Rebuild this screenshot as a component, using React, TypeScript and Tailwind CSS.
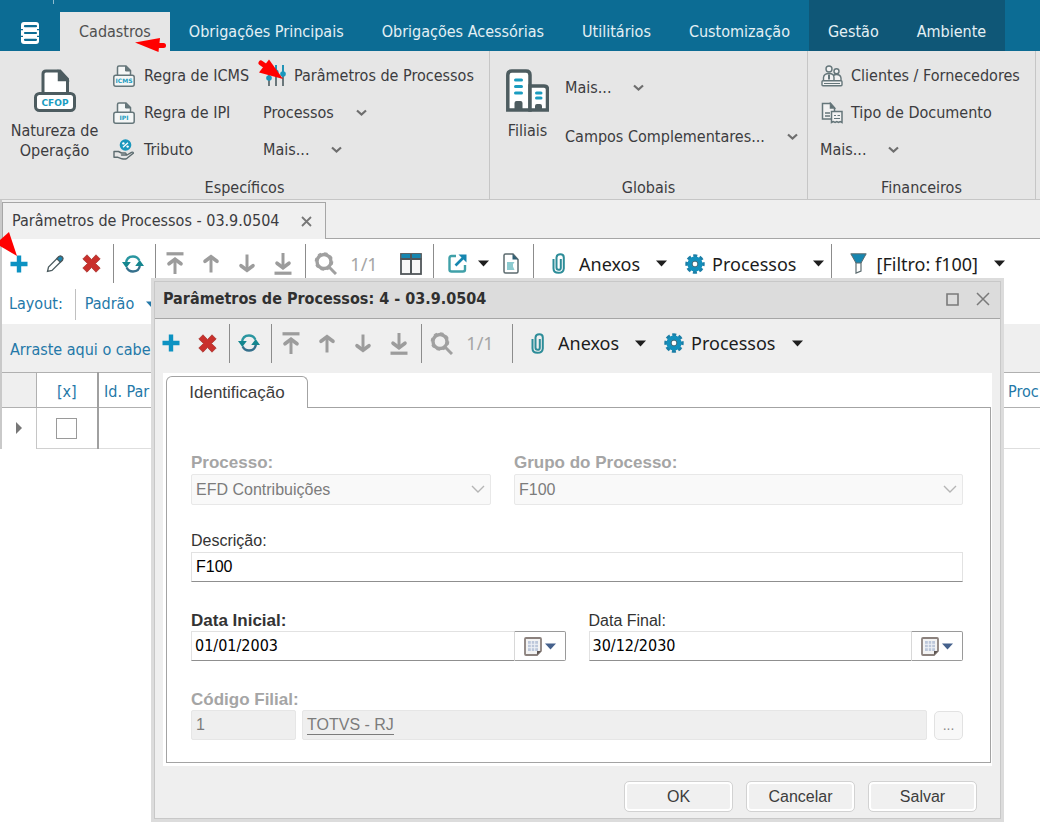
import type { ReactNode } from "react";

const UI = "font-['DejaVu_Sans_Condensed','Noto_Sans',sans-serif]";
const FORM = "font-['Liberation_Sans',sans-serif]";

/* ---------- icons ---------- */

function Stack() {
  return (
    <svg width="20" height="22" viewBox="0 0 20 22" fill="none">
      <rect x="1" y="0" width="18" height="22" rx="3" fill="#fff" />
      <path d="M5 4.200h11M5 11h11M5 17.800h11" stroke="#0c6c94" strokeWidth="2.200" strokeLinecap="round" />
      <path d="M0 7.600h3M17 7.600h3M0 14.400h3M17 14.400h3" stroke="#0c6c94" strokeWidth="1.400" />
    </svg>
  );
}

function Printer() {
  return (
    <svg width="42" height="43" viewBox="0 0 42 43" fill="#fff" stroke="#4d5c60" strokeWidth="3">
      <path d="M9 25V5q0-3 3-3h14l7.500 8v15" />
      <path d="M24.500 2v9.500h9.500z" fill="#4d5c60" strokeWidth="1.500" />
      <rect x="1.500" y="24.500" width="39" height="17" rx="4" />
      <text x="21" y="36.500" textAnchor="middle" fontFamily="DejaVu Sans" fontWeight="bold" fontSize="9" fill="#1a9cc0" stroke="none">
        CFOP
      </text>
    </svg>
  );
}

function SmallPrinter({ label }: { label: string }) {
  return (
    <svg width="22" height="22" viewBox="0 0 22 22" fill="#f4f6f6" stroke="#65767a" strokeWidth="1.500">
      <path d="M4.500 11V2.500q0-1.500 1.500-1.500h7l4.500 4.500V11" />
      <path d="M12.500 1v5H17.500z" fill="#65767a" strokeWidth="1" />
      <rect x=".8" y="10.200" width="20.400" height="11" rx="2" />
      <text x="11" y="18" textAnchor="middle" fontFamily="DejaVu Sans" fontWeight="bold" fontSize="6" fill="#1a9cc0" stroke="none">
        {label}
      </text>
    </svg>
  );
}

function Tribute() {
  return (
    <svg width="21" height="21" viewBox="0 0 21 21" fill="none">
      <circle cx="12.500" cy="6" r="5.800" fill="#1a97bd" />
      <path d="M10 8.300l5-4.600" stroke="#fff" strokeWidth="1.300" />
      <circle cx="10.400" cy="4.400" r="1.200" fill="#fff" />
      <circle cx="14.600" cy="7.600" r="1.200" fill="#fff" />
      <path d="M1 12.500h4.500l3 1.500h3.500q1.500.2 1 1.600l-4.500.4h5.500l4.500-2.700q2-.6 1.800 1L14 19.300q-2 1.200-5 .5l-4-1.500H1z" fill="#e6e6e6" stroke="#5c6b6f" strokeWidth="1.400" strokeLinejoin="round" />
    </svg>
  );
}

function Sliders() {
  return (
    <svg width="20" height="21" viewBox="0 0 20 21" fill="none">
      <path d="M3 0v21M10 0v21M17 0v21" stroke="#5c6b6f" strokeWidth="1.800" />
      <path d="M3 0v10M10 0v7M17 0v9" stroke="#1a97bd" strokeWidth="1.800" />
      <circle cx="3" cy="13" r="2.800" fill="#1a97bd" />
      <circle cx="10" cy="7" r="2.600" fill="#1a97bd" />
      <circle cx="17" cy="9" r="2.800" fill="#1a97bd" />
    </svg>
  );
}

function Buildings() {
  return (
    <svg width="43" height="43" viewBox="0 0 43 43">
      <path d="M1.800 41V6q0-4 4-4H20q4 0 4 4v35z" fill="#fff" stroke="#4d5c60" strokeWidth="3.500" />
      <path d="M24 41V17h14q3.500 0 3.500 3.500V41z" fill="#fff" stroke="#4d5c60" strokeWidth="3.500" />
      <path d="M8.500 42v-8q0-2 2-2h4q2 0 2 2v8zM29 42v-5q0-2 2-2h3q2 0 2 2v5z" fill="#4d5c60" />
      <path d="M9.500 11h6M9.500 17.500h6M9.500 24h6M30.500 24h4.500M30.500 29h4.500" stroke="#1a9cc0" strokeWidth="3" strokeLinecap="round" />
    </svg>
  );
}

function People() {
  return (
    <svg width="22" height="22" viewBox="0 0 22 22" fill="#f2f2f2" stroke="#65767a" strokeWidth="1.400">
      <circle cx="15.500" cy="6.300" r="2.500" />
      <path d="M11.500 16v-3q0-3.500 4-3.500t4.500 3.500v3" />
      <circle cx="8" cy="4" r="3" />
      <path d="M2.500 16v-3.500Q3 8.500 8 8.500t5 4V16" />
      <path d="M8 9.500v5" strokeWidth="2" />
      <rect x="1" y="15.800" width="20" height="5" rx="1" />
      <path d="M3 18.500h16" strokeWidth="1" />
    </svg>
  );
}

function Docs() {
  return (
    <svg width="22" height="22" viewBox="0 0 22 22" fill="#f2f2f2" stroke="#65767a" strokeWidth="1.500">
      <path d="M1.500 1.500h8l4 4.500v11h-12z" />
      <path d="M9.500 1.500V6h4z" fill="#5c6b6f" />
      <path d="M4 11h5M4 14h5" />
      <path d="M10.500 9.500h10.500v11l-1.800-1-1.700 1-1.700-1-1.700 1-1.800-1-1.800 1z" />
      <path d="M13 13.500h2m1.500 0h2.500M13 16.500h6" strokeWidth="1.200" />
    </svg>
  );
}

function Chevron() {
  return (
    <svg width="11" height="8" viewBox="0 0 11 8" fill="none" stroke="#6e6e6e" strokeWidth="2.200">
      <path d="M1 1.500l4.500 4 4.500-4" />
    </svg>
  );
}

function Caret({ color = "#1e1e1e" }: { color?: string }) {
  return (
    <svg width="11" height="7" viewBox="0 0 11 7" fill={color}>
      <path d="M0 .5h11L5.500 6.500z" />
    </svg>
  );
}

function Plus() {
  return (
    <svg width="18" height="18" viewBox="0 0 18 18">
      <path d="M6.800.500h4.400v6.300h6.300v4.400h-6.300v6.300H6.800v-6.300H.5V6.800h6.300z" fill="#0c92c2" />
    </svg>
  );
}

function Pencil() {
  return (
    <svg width="19" height="19" viewBox="0 0 19 19" fill="#fff" stroke="#4d5c60" strokeWidth="1.300">
      <path d="M1.500 17.500l1-4.500L13 2.500q1.500-1 3 .2t.5 3.300L6 16.500z" />
      <path d="M10.800 4.700L13 2.500q1.500-1 3 .2t.5 3.300l-2.200 2.200z" fill="#1a87b3" />
    </svg>
  );
}

function Cross() {
  return (
    <svg width="19" height="19" viewBox="0 0 19 19">
      <path d="M5 .8l4.500 4.700L14 .8 18.200 5l-4.700 4.500 4.700 4.500-4.200 4.200-4.500-4.700L5 18.200.8 14l4.700-4.500L.8 5z" fill="#c9302c" stroke="#a83a35" strokeWidth=".8" />
    </svg>
  );
}

function Refresh() {
  return (
    <svg width="22" height="18" viewBox="0 0 22 18" fill="none" strokeWidth="2.300">
      <path d="M4 8.500Q4.500 1.500 11 1.500q4.500 0 6.300 4" stroke="#2a96a0" />
      <path d="M18 9.500Q17.500 16.500 11 16.500q-4.500 0-6.300-4" stroke="#35708c" />
      <path d="M0 7h8.800L4.300 13zM13.200 11H22L17.700 5z" fill="#14868f" />
    </svg>
  );
}

function Arrow({ down = false, bar = false }: { down?: boolean; bar?: boolean }) {
  return (
    <svg width="18" height="23" viewBox="0 0 18 23" fill="none" stroke="#9c9c9c" strokeWidth="3">
      <g transform={down ? "rotate(180 9 11.5)" : undefined}>
        {bar && <path d="M.5 1.800h17" strokeWidth="3.200" />}
        <path d={bar ? "M9 22V8" : "M9 20.500V5"} />
        <path d={bar ? "M3 11.800L9 7.300l6 4.500" : "M3 9.300L9 4.800l6 4.500"} strokeWidth="3.600" strokeLinecap="round" />
      </g>
    </svg>
  );
}

function Search() {
  return (
    <svg width="23" height="23" viewBox="0 0 23 23" fill="none" stroke="#a0a0a0">
      <circle cx="10" cy="9.500" r="7" strokeWidth="3.400" />
      <circle cx="10" cy="9.500" r="8.600" strokeWidth="1.400" strokeDasharray="3.400 3.350" />
      <path d="M15.500 15.500l6.500 6.500" strokeWidth="3" />
    </svg>
  );
}

function Columns() {
  return (
    <svg width="22" height="22" viewBox="0 0 22 22">
      <rect x="1" y="1" width="20" height="20" fill="#f7f7f7" stroke="#505659" strokeWidth="1.800" />
      <path d="M1.500 1h19v4.500h-19z" fill="#1686b0" />
      <path d="M.5 6h21M11 1v20" stroke="#505659" strokeWidth="2" />
    </svg>
  );
}

function Export() {
  return (
    <svg width="19" height="19" viewBox="0 0 19 19" fill="none">
      <path d="M8 2H3.500Q1.500 2 1.500 4v11.500q0 2 2 2H15q2 0 2-2V11" stroke="#3fa0a8" strokeWidth="2.400" />
      <path d="M7.500 11.500L16 3" stroke="#1686b0" strokeWidth="2.600" />
      <path d="M10.500.5h8v8z" fill="#1686b0" />
    </svg>
  );
}

function Report() {
  return (
    <svg width="16" height="21" viewBox="0 0 16 21">
      <path d="M1 2.500Q1 1 2.500 1H10l5 5.500v12q0 1.500-1.500 1.500h-11Q1 20 1 18.500z" fill="#fff" stroke="#5c6b6f" strokeWidth="1.500" />
      <path d="M9.500 1v5.500H15z" fill="#2f5f74" />
      <path d="M4 9h7.500L10 11.200v2.300l1.500 3.500H4z" fill="#8ccbd0" />
    </svg>
  );
}

function Clip() {
  return (
    <svg width="14" height="21" viewBox="0 0 14 21" fill="none" stroke="#2c8c98" strokeWidth="2">
      <path d="M1.500 6v9.500q0 4.300 5 4.300t5.300-4.300V4.500Q11.800 1.200 8.300 1.200T4.500 4.500v10q0 2.300 2.200 2.300t2.100-2.300V6" />
    </svg>
  );
}

function Gear() {
  return (
    <svg width="20" height="20" viewBox="0 0 20 20">
      <circle cx="10" cy="10" r="8.200" fill="none" stroke="#1c7ea6" strokeWidth="3" strokeDasharray="4 2.440" strokeDashoffset="2" />
      <circle cx="10" cy="10" r="7.600" fill="#1290bd" />
      <circle cx="10" cy="10" r="2.900" fill="#fff" stroke="#3b6473" strokeWidth="1" />
    </svg>
  );
}

function Funnel() {
  return (
    <svg width="17" height="21" viewBox="0 0 17 21">
      <path d="M6 9h5v9l-5 2z" fill="#fff" stroke="#5c6b6f" strokeWidth="1.200" />
      <path d="M.8.800h15.400L11 10H6z" fill="#1686b0" stroke="#5c6b6f" strokeWidth="1" />
    </svg>
  );
}

function Calendar() {
  return (
    <svg width="18" height="19" viewBox="0 0 18 19">
      <path d="M1 2q0-1 1-1h14q1 0 1 1v12l-4 4H2q-1 0-1-1z" fill="#f3f3f3" stroke="#8b817d" strokeWidth="1.800" />
      <path d="M4 4h10v10H4z" fill="#bcc7da" />
      <path d="M7.300 4v10M10.700 4v10M4 7.300h10M4 10.700h10" stroke="#eef1f6" strokeWidth="1" />
      <path d="M17 14h-4v4z" fill="#5d5552" />
    </svg>
  );
}

/* ---------- ribbon ---------- */

function RibbonTab({ children, active = false }: { children: ReactNode; active?: boolean }) {
  return (
    <button
      type="button"
      className={
        active
          ? "mt-3 h-[39px] bg-[#e6e6e6] px-[19px] text-[#505050]"
          : "mt-3 h-[39px] px-[19px] text-[#e4f0f5]"
      }
    >
      {children}
    </button>
  );
}

function RibbonItem({ icon, children, menu = false }: { icon?: ReactNode; children: ReactNode; menu?: boolean }) {
  return (
    <button type="button" className="flex h-[37px] items-center whitespace-nowrap text-left">
      {icon && <span className="flex w-[31px] shrink-0">{icon}</span>}
      <span>{children}</span>
      {menu && (
        <span className="ml-[22px]">
          <Chevron />
        </span>
      )}
    </button>
  );
}

function RibbonGroup({ title, className, children }: { title: string; className: string; children: ReactNode }) {
  return (
    <section aria-label={title} className={`flex shrink-0 flex-col border-r border-[#c6c6c6] pt-[6px] ${className}`}>
      <div className="flex h-[111px]">{children}</div>
      <div className="flex h-[31px] items-center justify-center pt-[9px]">{title}</div>
    </section>
  );
}

/* ---------- toolbar ---------- */

function Tool({ label, children }: { label: string; children: ReactNode }) {
  return (
    <button type="button" aria-label={label} className="flex h-9 w-9 shrink-0 items-center justify-center">
      {children}
    </button>
  );
}

function Sep() {
  return <span className="ml-1 mr-px h-[39px] w-px shrink-0 bg-[#8c8c8c]" />;
}

function MenuTool({ icon, children }: { icon: ReactNode; children: ReactNode }) {
  return (
    <button type="button" className="flex h-9 shrink-0 items-center whitespace-nowrap text-[18px] text-[#1c1c1c]">
      <span className="flex w-[27px] items-center">{icon}</span>
      <span>{children}</span>
      <span className="ml-4">
        <Caret />
      </span>
    </button>
  );
}

function NavTools() {
  return (
    <>
      <Sep />
      <Tool label="Atualizar"><Refresh /></Tool>
      <Sep />
      <Tool label="Primeiro"><Arrow bar /></Tool>
      <Tool label="Anterior"><Arrow /></Tool>
      <Tool label="Próximo"><Arrow down /></Tool>
      <Tool label="Último"><Arrow down bar /></Tool>
      <Sep />
      <Tool label="Pesquisar"><Search /></Tool>
      <span className="w-[42px] shrink-0 text-center text-[18px] text-[#a6a6a6]">1/1</span>
    </>
  );
}

/* ---------- form ---------- */

function DateField({ id, label, value, required = false }: { id: string; label: string; value: string; required?: boolean }) {
  return (
    <div className="min-w-0 flex-1">
      <label htmlFor={id} className={required ? "block h-[21px] text-[17px] font-bold leading-[21px] text-[#333]" : "block h-[21px] text-[16px] leading-[21px] text-[#333]"}>
        {label}
      </label>
      <div className="flex h-[30px]">
        <input
          id={id}
          type="text"
          defaultValue={value}
          className={`${UI} min-w-0 flex-1 border border-r-0 border-[#e2e2e2] border-b-[#8f8f8f] px-[3px] text-[16px] text-black outline-none`}
        />
        <button type="button" aria-label={`Abrir calendário: ${label}`} className="flex w-[52px] items-center justify-center gap-[3px] rounded-r-[2px] border border-[#9a9a9a] border-l-[#d8d8d8] bg-white">
          <Calendar />
          <Caret color="#45618c" />
        </button>
      </div>
    </div>
  );
}

function DisabledSelect({ id, label, value, className }: { id: string; label: string; value: string; className: string }) {
  return (
    <div className={className}>
      <label htmlFor={id} className="block h-[22px] text-[17px] font-bold leading-[22px] text-[#a5a5a5]">
        {label}
      </label>
      <div className="relative">
        <select id={id} disabled className="h-[31px] w-full appearance-none rounded-[2px] border border-[#e8e8e8] bg-[#f9f9f9] px-1 text-[16px] text-[#7c7c7c] opacity-100">
          <option>{value}</option>
        </select>
        <svg width="14" height="9" viewBox="0 0 14 9" fill="none" stroke="#b5b5b5" strokeWidth="1.400" className="pointer-events-none absolute right-[6px] top-[11px]">
          <path d="M1 1l6 6 6-6" />
        </svg>
      </div>
    </div>
  );
}

function DialogButton({ children }: { children: ReactNode }) {
  return (
    <button type="button" className={`${FORM} h-[31px] w-[109px] rounded-[5px] border border-[#d2d2d2] bg-[#f0f0f0] text-[16px] text-[#3d3d3d] shadow-[inset_0_0_0_2px_#fff]`}>
      {children}
    </button>
  );
}

function Dialog() {
  return (
    <div role="dialog" aria-labelledby="dlg-title" className="absolute left-[151px] right-[36px] top-[278px] border-[3px] border-[#dcdcdc] bg-[#efefef]">
      <div className="border border-[#c8c8c8]">
        <header className="flex h-[37px] items-center border-b border-[#a6a6a6] bg-[#dcdcdc] pb-[2px] pl-2 pr-[10px]">
          <h2 id="dlg-title" className="text-[16px] font-bold text-[#303030]">
            Parâmetros de Processos: 4 - 03.9.0504
          </h2>
          <div className="ml-auto flex items-center gap-[17px]">
            <button type="button" aria-label="Maximizar">
              <svg width="13" height="13" viewBox="0 0 13 13" fill="none" stroke="#7a7a7a" strokeWidth="1.600"><path d="M1 1h11v11H1z" /></svg>
            </button>
            <button type="button" aria-label="Fechar">
              <svg width="14" height="14" viewBox="0 0 14 14" fill="none" stroke="#7a7a7a" strokeWidth="1.500"><path d="M1 1l12 12M13 1L1 13" /></svg>
            </button>
          </div>
        </header>

        <div className="flex h-[48px] items-center font-['Noto_Sans',sans-serif]">
          <span className="-ml-0.5 flex">
            <Tool label="Incluir"><Plus /></Tool>
            <Tool label="Excluir"><Cross /></Tool>
          </span>
          <NavTools />
          <span className="w-[7px]" />
          <Sep />
          <span className="w-[17px]" />
          <MenuTool icon={<Clip />}>Anexos</MenuTool>
          <span className="w-[18px]" />
          <MenuTool icon={<Gear />}>Processos</MenuTool>
        </div>

        <div className="ml-2 mr-2 mt-[6px] bg-white pb-[3px] pl-[3px] pr-px pt-[3px]">
          <div role="tablist" className="flex">
            <button type="button" role="tab" aria-selected="true" className={`${FORM} relative -mb-px h-[32px] w-[142px] rounded-t-[6px] border border-b-0 border-[#a3a3a3] bg-white text-[17px] text-[#3d3d3d]`}>
              Identificação
            </button>
          </div>
          <form className={`${FORM} flex flex-col border border-[#a3a3a3] pb-[22px] pl-6 pr-[27px] pt-[44px]`}>
            <div className="flex gap-[23px]">
              <DisabledSelect id="processo" label="Processo:" value="EFD Contribuições" className="w-[300px]" />
              <DisabledSelect id="grupo" label="Grupo do Processo:" value="F100" className="min-w-0 flex-1" />
            </div>

            <div className="mt-[25px]">
              <label htmlFor="descricao" className="block h-[22px] text-[16px] leading-[22px] text-[#333]">Descrição:</label>
              <input id="descricao" type="text" defaultValue="F100" className="h-[30px] w-full border border-[#e2e2e2] border-b-[#8f8f8f] px-1 text-[16px] text-black outline-none" />
            </div>

            <div className="mt-7 flex gap-[23px]">
              <DateField id="data-inicial" label="Data Inicial:" value="01/01/2003" required />
              <DateField id="data-final" label="Data Final:" value="30/12/2030" />
            </div>

            <div className="mt-7">
              <label htmlFor="filial" className="block h-[21px] text-[17px] font-bold leading-[21px] text-[#a5a5a5]">Código Filial:</label>
              <div className="flex items-center">
                <input id="filial" type="text" disabled defaultValue="1" className="h-[30px] w-[105px] rounded-[2px] border border-[#e6e6e6] bg-[#efefef] px-1 text-[16px] text-[#7c7c7c]" />
                <div className="ml-[6px] flex h-[30px] min-w-0 flex-1 items-center rounded-[2px] border border-[#e6e6e6] bg-[#efefef] px-1">
                  <a href="#filial" className="border-b border-[#7c7c7c] text-[16px] leading-[18px] text-[#7c7c7c]">TOTVS - RJ</a>
                </div>
                <button type="button" disabled aria-label="Selecionar filial" className="ml-[7px] h-[29px] w-[29px] rounded-[5px] border border-[#e2e2e2] bg-[#f8f8f8] text-[14px] text-[#8a8a8a]">...</button>
              </div>
            </div>
          </form>
        </div>

        <footer className="flex justify-end gap-[13px] pb-[6px] pr-[23px] pt-[15px]">
          <DialogButton>OK</DialogButton>
          <DialogButton>Cancelar</DialogButton>
          <DialogButton>Salvar</DialogButton>
        </footer>
      </div>
    </div>
  );
}

/* ---------- page ---------- */

export default function App() {
  return (
    <div className={`${UI} relative min-h-screen overflow-hidden bg-white text-[16px] leading-[20px] text-[#3c3c40]`}>
      <nav className="flex h-[51px] whitespace-nowrap bg-[#0c6c94]">
        <button type="button" aria-label="Menu" className="flex w-[60px] shrink-0 items-center justify-center pt-[15px]">
          <Stack />
        </button>
        <RibbonTab active>Cadastros</RibbonTab>
        <RibbonTab>Obrigações Principais</RibbonTab>
        <RibbonTab>Obrigações Acessórias</RibbonTab>
        <RibbonTab>Utilitários</RibbonTab>
        <RibbonTab>Customização</RibbonTab>
        <div className="flex bg-[#0f5777]">
          <RibbonTab>Gestão</RibbonTab>
          <RibbonTab>Ambiente</RibbonTab>
        </div>
      </nav>

      <div className="flex border-b border-[#c6c6c6] bg-[#e6e6e6]">
        <RibbonGroup title="Específicos" className="w-[490px]">
          <button type="button" className="flex w-[113px] shrink-0 flex-col items-center pr-1 pt-3">
            <Printer />
            <span className="mt-[9px]">Natureza de Operação</span>
          </button>
          <div className="w-[150px] shrink-0">
            <RibbonItem icon={<SmallPrinter label="ICMS" />}>Regra de ICMS</RibbonItem>
            <RibbonItem icon={<SmallPrinter label="IPI" />}>Regra de IPI</RibbonItem>
            <RibbonItem icon={<Tribute />}>Tributo</RibbonItem>
          </div>
          <div>
            <RibbonItem icon={<span className="pl-[3px]"><Sliders /></span>}>Parâmetros de Processos</RibbonItem>
            <RibbonItem menu>Processos</RibbonItem>
            <RibbonItem menu>Mais...</RibbonItem>
          </div>
        </RibbonGroup>
        <RibbonGroup title="Globais" className="w-[318px]">
          <button type="button" className="flex w-[75px] shrink-0 flex-col items-center pt-3">
            <Buildings />
            <span className="mt-[9px]">Filiais</span>
          </button>
          <div className="flex flex-col gap-3 pt-3">
            <RibbonItem menu>Mais...</RibbonItem>
            <RibbonItem menu>Campos Complementares...</RibbonItem>
          </div>
        </RibbonGroup>
        <RibbonGroup title="Financeiros" className="w-[228px]">
          <div className="pl-3">
            <RibbonItem icon={<span className="pl-px"><People /></span>}>Clientes / Fornecedores</RibbonItem>
            <RibbonItem icon={<span className="pl-px"><Docs /></span>}>Tipo de Documento</RibbonItem>
            <RibbonItem menu>Mais...</RibbonItem>
          </div>
        </RibbonGroup>
      </div>

      <div className="border-l-2 border-[#c9c9c9]">
        <div className="flex h-[39px] items-end border-b border-[#a6a6a6] bg-[#efefef]">
          <div className="-mb-px flex h-[37px] items-center gap-[22px] border border-b-0 border-[#a6a6a6] bg-[#f0f0f0] pl-[9px] pr-[13px]">
            <span>Parâmetros de Processos - 03.9.0504</span>
            <button type="button" aria-label="Fechar aba">
              <svg width="11" height="11" viewBox="0 0 11 11" fill="none" stroke="#777" strokeWidth="1.800"><path d="M1 1l9 9M10 1l-9 9" /></svg>
            </button>
          </div>
        </div>

        <div className="-ml-px flex h-[49px] items-center font-['Noto_Sans',sans-serif]">
          <Tool label="Incluir"><Plus /></Tool>
          <Tool label="Editar"><Pencil /></Tool>
          <Tool label="Excluir"><Cross /></Tool>
          <NavTools />
          <span className="w-2" />
          <Tool label="Colunas"><Columns /></Tool>
          <Sep />
          <span className="w-1" />
          <button type="button" aria-label="Exportar" className="flex h-9 w-[54px] shrink-0 items-center gap-[11px] pl-[9px]">
            <Export />
            <Caret />
          </button>
          <Tool label="Relatório"><Report /></Tool>
          <Sep />
          <span className="w-[17px] shrink-0" />
          <MenuTool icon={<Clip />}>Anexos</MenuTool>
          <span className="w-[18px] shrink-0" />
          <MenuTool icon={<Gear />}>Processos</MenuTool>
          <span className="w-[3px] shrink-0" />
          <Sep />
          <span className="w-[17px] shrink-0" />
          <MenuTool icon={<Funnel />}>[Filtro: f100]</MenuTool>
        </div>

        <div className="flex h-[36px] items-center pb-1 pl-[7px] text-[#2478a8]">
          <span>Layout:</span>
          <span className="ml-3 mr-[9px] h-[31px] w-px bg-[#c0c0c0]" />
          <button type="button" className="flex items-center gap-3">
            Padrão <Caret color="#2478a8" />
          </button>
        </div>

        <div className="flex h-[48px] items-center bg-[#efefef] pl-2 text-[#2478a8]">
          <span className="pt-[3px]">Arraste aqui o cabe</span>
        </div>

        <table className="w-full table-fixed border-collapse text-[#2478a8]">
          <thead>
            <tr className="h-[35px]">
              <th aria-label="Seleção" className="w-[34px] border-y border-r border-[#b0b0b0] bg-[#efefef]" />
              <th className="w-[62px] border-y border-[#b0b0b0] border-r-2 border-r-[#a0a0a0] pt-1 font-normal">[x]</th>
              <th className="border-y border-[#b0b0b0] pl-[5px] pt-1 text-left font-normal">Id. Par</th>
              <th className="w-[37px] whitespace-nowrap border-y border-[#b0b0b0] pl-[5px] pt-1 text-left font-normal">Proc</th>
            </tr>
          </thead>
          <tbody>
            <tr className="h-[41px]">
              <td className="border-r border-[#c6c6c6]">
                <svg width="6" height="12" viewBox="0 0 6 12" fill="#777" className="mx-auto"><path d="M0 0l6 6-6 6z" /></svg>
              </td>
              <td className="border-b border-r-2 border-[#d0d0d0] border-r-[#a0a0a0] text-center">
                <input type="checkbox" aria-label="Selecionar linha" className="mx-auto block h-[21px] w-[21px] appearance-none border border-[#9a9a9a] bg-white" />
              </td>
              <td className="border-b border-[#dedede]" />
              <td className="border-b border-[#dedede]" />
            </tr>
          </tbody>
        </table>
      </div>

      <Dialog />

      <span className="absolute left-[53px] top-0 h-1 w-px bg-[#8fbccf]" />
      <svg aria-hidden="true" width="32" height="16" viewBox="0 0 32 16" className="absolute left-[135px] top-[37px]" fill="#f00">
        <path d="M0 5.500L25 1l-1.500 14z" />
        <path d="M20 8.500h8.500" stroke="#f00" strokeWidth="5" strokeLinecap="round" />
      </svg>
      <svg aria-hidden="true" width="28" height="22" viewBox="0 0 28 22" className="absolute left-[257px] top-[59px]" fill="#f00">
        <path d="M26 20L2 13.500 12 .5z" />
        <path d="M4 4l5 3.500" stroke="#f00" strokeWidth="5" strokeLinecap="round" />
      </svg>
      <svg aria-hidden="true" width="18" height="24" viewBox="0 0 18 24" className="absolute left-0 top-[232px]" fill="#f00">
        <path d="M17 24L0 14V8L9 0z" />
      </svg>
    </div>
  );
}
